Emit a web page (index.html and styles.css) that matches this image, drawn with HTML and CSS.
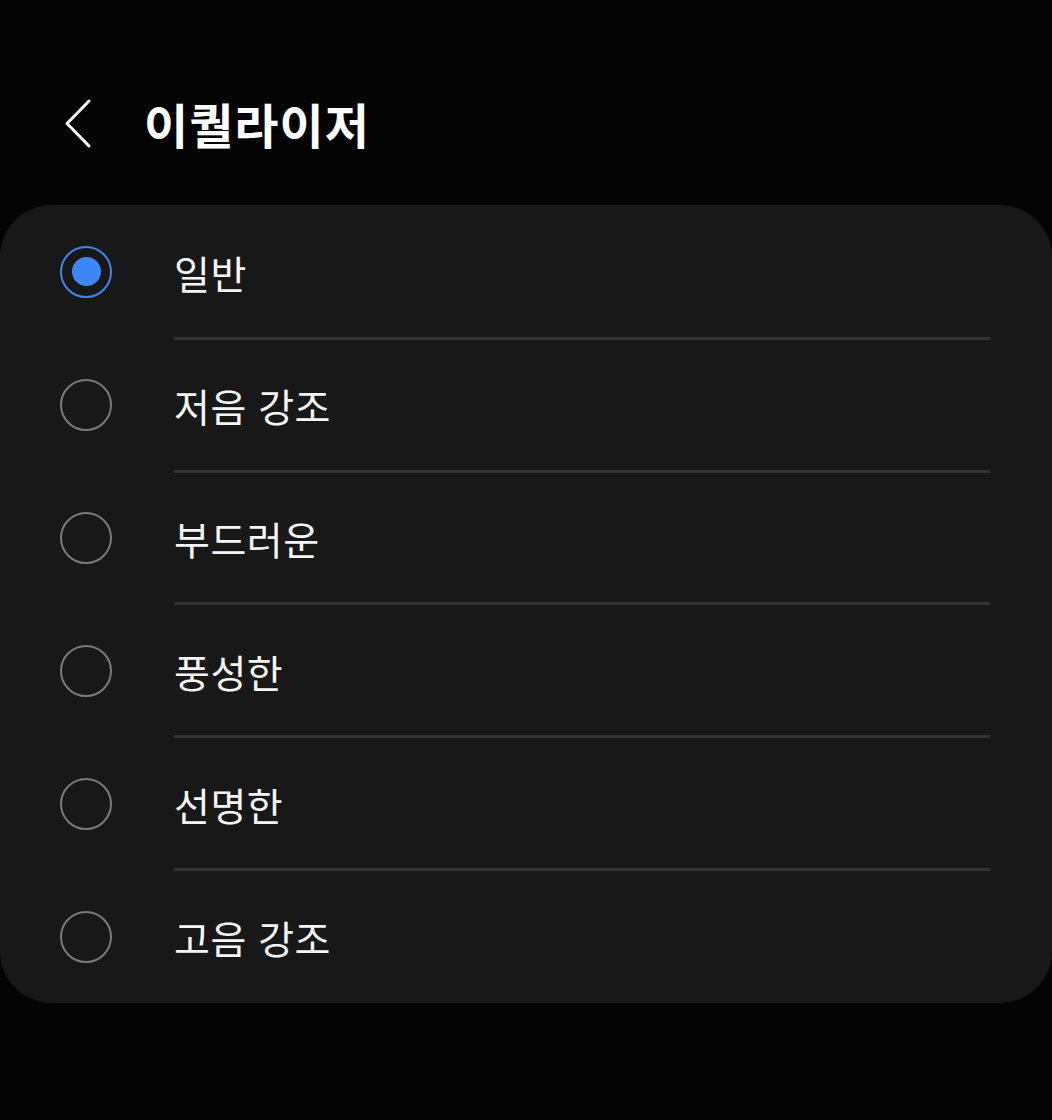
FILE: index.html
```html
<!DOCTYPE html>
<html lang="ko">
<head>
<meta charset="utf-8">
<title>이퀄라이저</title>
<link rel="stylesheet" href="styles.css">
</head>
<body>
<div class="screen">
  <header class="appbar">
    <button class="back" aria-label="뒤로">
      <svg width="30" height="50" viewBox="0 0 30 50"><polyline points="25,3 3,25.5 25,48" fill="none" stroke="#ffffff" stroke-width="3" stroke-linecap="round" stroke-linejoin="round"/></svg>
    </button>
    <h1 class="title">이퀄라이저</h1>
  </header>
  <ul class="card">
    <li class="row selected"><span class="radio"></span><span class="label">일반</span></li>
    <li class="row"><span class="radio"></span><span class="label">저음 강조</span></li>
    <li class="row"><span class="radio"></span><span class="label">부드러운</span></li>
    <li class="row"><span class="radio"></span><span class="label">풍성한</span></li>
    <li class="row"><span class="radio"></span><span class="label">선명한</span></li>
    <li class="row"><span class="radio"></span><span class="label">고음 강조</span></li>
  </ul>
</div>
</body>
</html>
```
FILE: styles.css
```css
* { box-sizing: border-box; }
html, body { margin: 0; padding: 0; background: #040404; }
body {
  font-family: "Noto Sans CJK KR", "Noto Sans", sans-serif;
  color: #f5f5f5;
  width: 1052px;
  height: 1120px;
  overflow: hidden;
}
.screen { display: flex; flex-direction: column; }
.appbar {
  height: 205px;
  display: flex;
  align-items: center;
  padding: 41px 0 0 64px;
}
.back {
  background: none;
  border: 0;
  padding: 0;
  width: 30px;
  height: 50px;
  display: flex;
  margin-right: 50px;
}
.title {
  margin: 0;
  font-size: 48px;
  font-weight: 700;
  color: #ffffff;
  letter-spacing: 1px;
  line-height: 1;
}
.card {
  list-style: none;
  margin: 0;
  padding: 0;
  background: #181818;
  border-radius: 52px;
  height: 798px;
  display: flex;
  flex-direction: column;
}
.row {
  height: 133px;
  display: flex;
  align-items: center;
  padding-left: 60px;
  position: relative;
}
.row:first-child { height: 134px; }
.row + .row::before {
  content: "";
  position: absolute;
  left: 174px;
  right: 62px;
  top: -2px;
  height: 3px;
  background: #333333;
}
.radio {
  width: 52px;
  height: 52px;
  border-radius: 50%;
  border: 2.5px solid #7a7a7a;
  display: flex;
  align-items: center;
  justify-content: center;
  flex: none;
}
.selected .radio { border-color: #3e86f5; }
.selected .radio::after {
  content: "";
  width: 29px;
  height: 29px;
  border-radius: 50%;
  background: #3e86f5;
}
.label {
  margin-left: 62px;
  font-size: 39px;
  font-weight: 400;
  color: #f5f5f5;
  letter-spacing: 0.5px;
}
```
